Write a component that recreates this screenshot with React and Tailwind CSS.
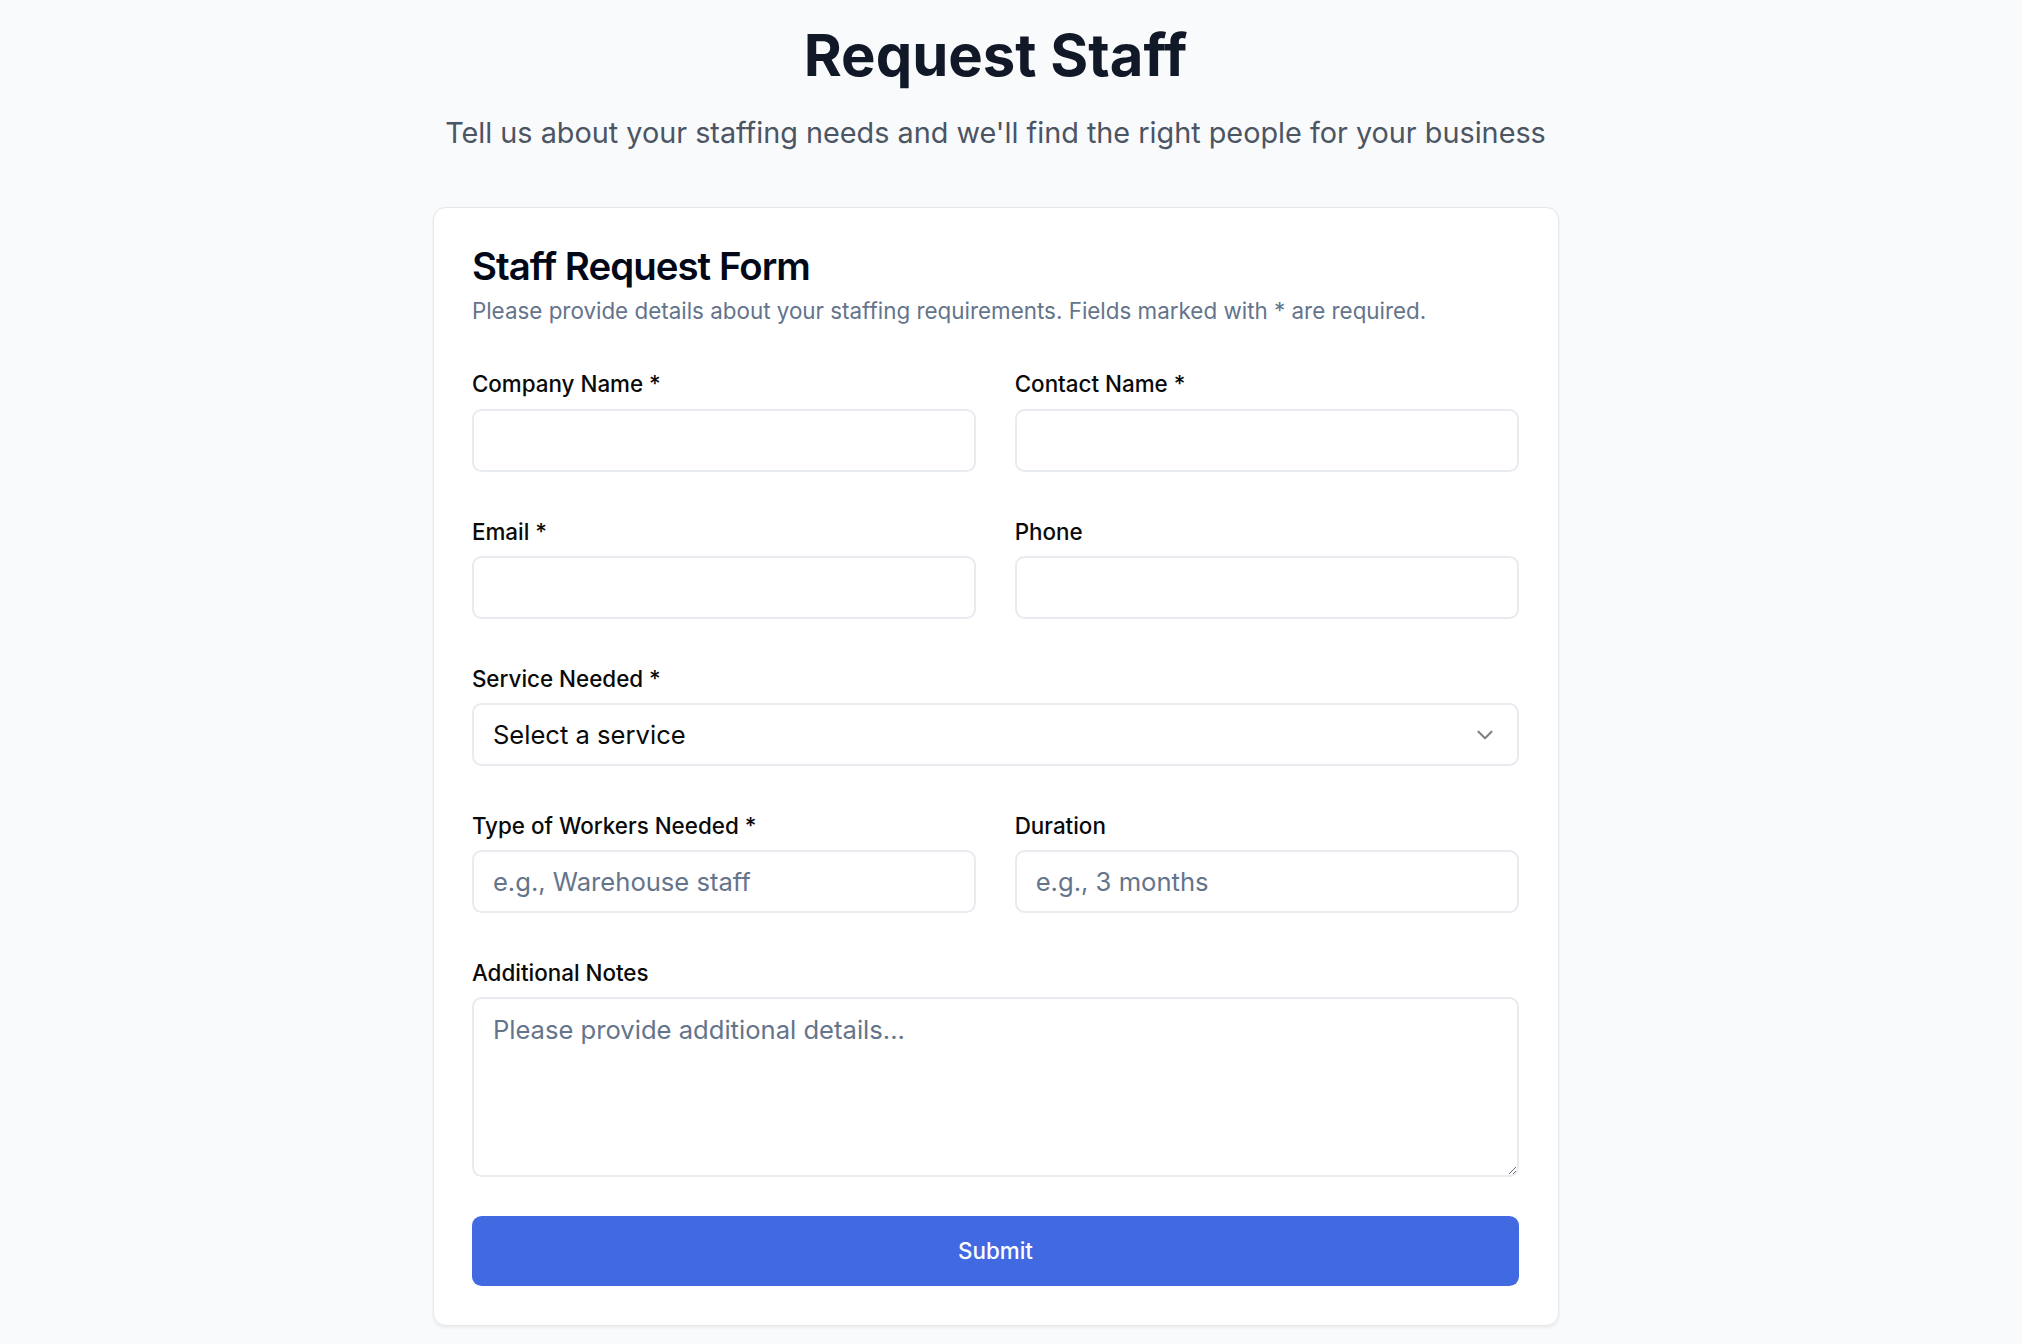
import React from "react";
import { ChevronDown } from "lucide-react";

const labelCls = "text-[22.4px] font-medium leading-none text-[#0a0a0a]";
const inputCls =
  "h-[63px] w-full rounded-[9.6px] border-2 border-[#e8ebf0] bg-white px-[19px] text-[25.6px] text-[#0a0a0a] outline-none placeholder:text-[#64748b]";

function Field({ label, children }) {
  return (
    <div className="flex flex-col gap-[13px]">
      <label className={labelCls}>{label}</label>
      {children}
    </div>
  );
}

export default function App() {
  return (
    <div className="min-h-screen bg-[#f9fafb] [font-family:Inter,sans-serif]">
      <div className="flex flex-col items-center pr-[31px] pt-[23px]">
        {/* page heading */}
        <h1 className="text-[58px] font-bold leading-[64px] text-[#111827]">Request Staff</h1>
        <p className="mt-[24px] text-[28.8px] leading-[44.8px] text-[#4b5563]">
          Tell us about your staffing needs and we'll find the right people for your business
        </p>

        {/* form card */}
        <div className="mt-[51.5px] w-[1126px] rounded-[12.8px] border border-[#e5e7eb] bg-white px-[38.4px] pb-[39px] pt-[39px] shadow-[0_1.6px_3px_rgba(0,0,0,0.06)]">
          <h2 className="text-[38.4px] font-semibold leading-none tracking-tight text-[#020817]">
            Staff Request Form
          </h2>
          <p className="mt-[9.6px] text-[22.4px] leading-[32px] text-[#64748b]">
            Please provide details about your staffing requirements. Fields marked with * are required.
          </p>

          <form className="mt-[46px] flex flex-col gap-[48.7px]" onSubmit={(e) => e.preventDefault()}>
            <div className="grid grid-cols-2 gap-x-[38.4px] gap-y-[49px]">
              <Field label="Company Name *">
                <input className={inputCls} />
              </Field>
              <Field label="Contact Name *">
                <input className={inputCls} />
              </Field>
              <Field label="Email *">
                <input type="email" className={inputCls} />
              </Field>
              <Field label="Phone">
                <input type="tel" className={inputCls} />
              </Field>
            </div>

            <Field label="Service Needed *">
              <button
                type="button"
                className="flex h-[63px] w-full items-center justify-between rounded-[9.6px] border-2 border-[#e8ebf0] bg-white px-[19px] text-left text-[25.6px] text-[#0a0a0a]"
              >
                <span>Select a service</span>
                <ChevronDown size={26} className="opacity-50" />
              </button>
            </Field>

            <div className="grid grid-cols-2 gap-x-[38.4px]">
              <Field label="Type of Workers Needed *">
                <input className={inputCls} placeholder="e.g., Warehouse staff" />
              </Field>
              <Field label="Duration">
                <input className={inputCls} placeholder="e.g., 3 months" />
              </Field>
            </div>

            <Field label="Additional Notes">
              <textarea
                className="h-[180px] w-full rounded-[9.6px] border-2 border-[#e8ebf0] bg-white px-[19px] py-[12.8px] text-[25.6px] leading-[36px] text-[#0a0a0a] outline-none placeholder:text-[#64748b]"
                placeholder="Please provide additional details..."
              />
            </Field>

            <button
              type="submit"
              className="-mt-[10px] h-[70px] w-full rounded-[9.6px] bg-[#4169e1] text-[22.4px] font-medium text-white"
            >
              Submit
            </button>
          </form>
        </div>
      </div>
    </div>
  );
}
